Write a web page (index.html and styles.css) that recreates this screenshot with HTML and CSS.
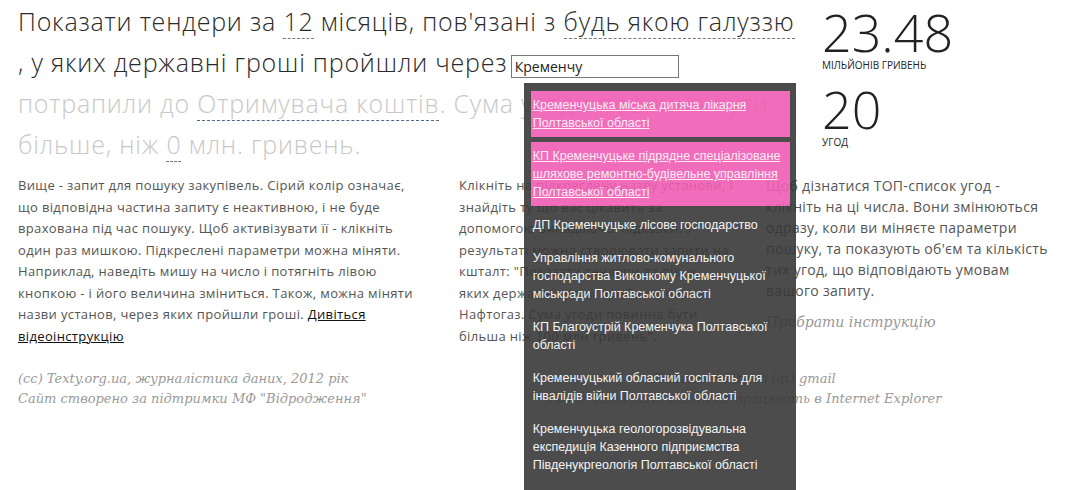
FILE: index.html
```html
<!DOCTYPE html>
<html>
<head>
    <title>Тендери</title>
    <meta charset="utf-8">
    <link rel="stylesheet" href="styles.css">
</head>
<body>

<div class="top">
    <div class="query">
        Показати тендери за <span class="param">12</span> місяців, пов'язані з <span class="param">будь якою галуззю </span>
        ,&nbsp;у яких державні гроші пройшли через
        <span class="search">
            <input type="text" class="search-input" value="Кременчу">
            <ul class="suggest">
                <li class="hot"><a href="#">Кременчуцька міська дитяча лікарня Полтавської області</a></li>
                <li class="hot"><a href="#">КП Кременчуцьке підрядне спеціалізоване шляхове ремонтно-будівельне управління Полтавської області</a></li>
                <li>ДП Кременчуцьке лісове господарство</li>
                <li>Управління житлово-комунального господарства Виконкому Кременчуцької міськради Полтавської області</li>
                <li>КП Благоустрій Кременчука Полтавської області</li>
                <li>Кременчуцький обласний госпіталь для інвалідів війни Полтавської області</li>
                <li>Кременчуцька геологорозвідувальна експедиція Казенного підприємства Південукргеологія Полтавської області</li>
            </ul>
        </span>
        <span class="off">потрапили до <span class="param blue">Отримувача коштів</span>. Сума угоди повинна бути більше, ніж <span class="param">0</span> млн. гривень.</span>
    </div>

    <div class="stats">
        <div class="num big">23.48</div>
        <div class="label">мільйонів гривень</div>
        <div class="num">20</div>
        <div class="label">угод</div>
    </div>
</div>

<div class="help">
    <div class="col first">
        Вище - запит для пошуку закупівель. Сірий колір означає, що відповідна частина запиту є неактивною, і не буде врахована під час пошуку. Щоб активізувати її - клікніть один раз мишкою. Підкреслені параметри можна міняти. Наприклад, наведіть мишу на число і потягніть лівою кнопкою - і його величина зміниться. Також, можна міняти назви установ, через яких пройшли гроші. <a href="#">Дивіться відеоінструкцію</a>
    </div>
    <div class="col second">
        Клікніть на підкреслену назву установи, і<br>
        знайдіть ту що вас цікавить за<br>
        допомогою випадаючої підказки. У<br>
        результаті можна створювати запити на<br>
        кшталт: "Показати тендери за рік, у<br>
        яких державні гроші пройшли через<br>
        Нафтогаз. Сума угоди повинна бути<br>
        більша ніж 100 млн гривень".
    </div>
    <div class="col third">
        Щоб дізнатися ТОП-список угод - клікніть на ці числа. Вони змінюються одразу, коли ви міняєте параметри пошуку, та показують об'єм та кількість тих угод, що відповідають умовам вашого запиту.
        <div class="hide">Прибрати інструкцію</div>
    </div>
</div>

<div class="footer">
    <div class="credits">
        (cc) Texty.org.ua, журналістика даних, 2012 рік<br>
        Сайт створено за підтримки МФ "Відродження"
    </div>
    <div class="contact">
        Пишіть: texty.ua (at) gmail<br>
        Увага: наші візуалізації не працюють в Internet Explorer
    </div>
</div>

</body>
</html>
```

FILE: styles.css
```css
html {
    height: 100%;
}

body {
    margin: 0px;
    min-height: 100%;
    font-family: "Open Sans", sans-serif;
    color: #555;
}

.top {
    display: flex;
    padding-left: 18px;
}

.query {
    width: 790px;
    padding-top: 1px;
    font-size: 25px;
    font-weight: 300;
    letter-spacing: 0.8px;
    line-height: 41px;
    color: #2a2a2a;
}

.param {
    border-bottom: 1px dashed #777;
}

.param.blue {
    border-bottom-color: #4f6584;
}

.off {
    color: #c8c8c8;
}

.search {
    display: inline-block;
    position: relative;
    margin-left: -4px;
    letter-spacing: 0;
}

.search-input {
    width: 168px;
    height: 23px;
    box-sizing: border-box;
    margin: 0;
    padding: 0 3px;
    border: 1px solid #777;
    font: 14px "Open Sans", sans-serif;
    color: #222;
    outline: none;
}

.suggest {
    position: absolute;
    left: 13px;
    top: 100%;
    z-index: 5;
    width: 272px;
    height: 413px;
    box-sizing: border-box;
    margin: 0;
    padding: 3px 6px 0 7px;
    list-style: none;
    background-color: #393939;
    opacity: 0.9;
    font: 12.5px "Liberation Sans", Arial, sans-serif;
    line-height: 18px;
    color: #f4f4f4;
}

.suggest li {
    margin-top: 5px;
    padding: 5px 2px;
}

.suggest li.hot {
    background-color: #f05db3;
}

.suggest a {
    color: #fbeaf4;
}

.stats {
    margin-left: 14px;
    color: #222;
}

.num {
    font-size: 52px;
    font-weight: 300;
    line-height: 52px;
}

.num.big {
    margin-top: 6px;
}

.label {
    font-size: 10px;
    text-transform: uppercase;
    line-height: 14px;
    margin-bottom: 11px;
}

.help {
    display: flex;
    margin-top: 10px;
    padding-left: 18px;
    font-size: 13px;
    line-height: 21.5px;
    letter-spacing: 0.35px;
}

.col.first {
    width: 400px;
}

.col.second {
    width: 300px;
    margin-left: 41px;
}

.col.third {
    width: 292px;
    margin-left: 7px;
    font-size: 14px;
    line-height: 21px;
    letter-spacing: 0.3px;
}

.col a {
    color: #111;
}

.hide {
    margin-top: 13px;
    font: italic 14px "DejaVu Serif", serif;
    letter-spacing: 0;
    color: #999;
}

.footer {
    display: flex;
    margin-top: 22px;
    padding-left: 18px;
    font: italic 13px "DejaVu Serif", serif;
    line-height: 20px;
    color: #999;
}

.credits {
    width: 441px;
}

.contact {
    width: 570px;
    text-align: center;
}
```
